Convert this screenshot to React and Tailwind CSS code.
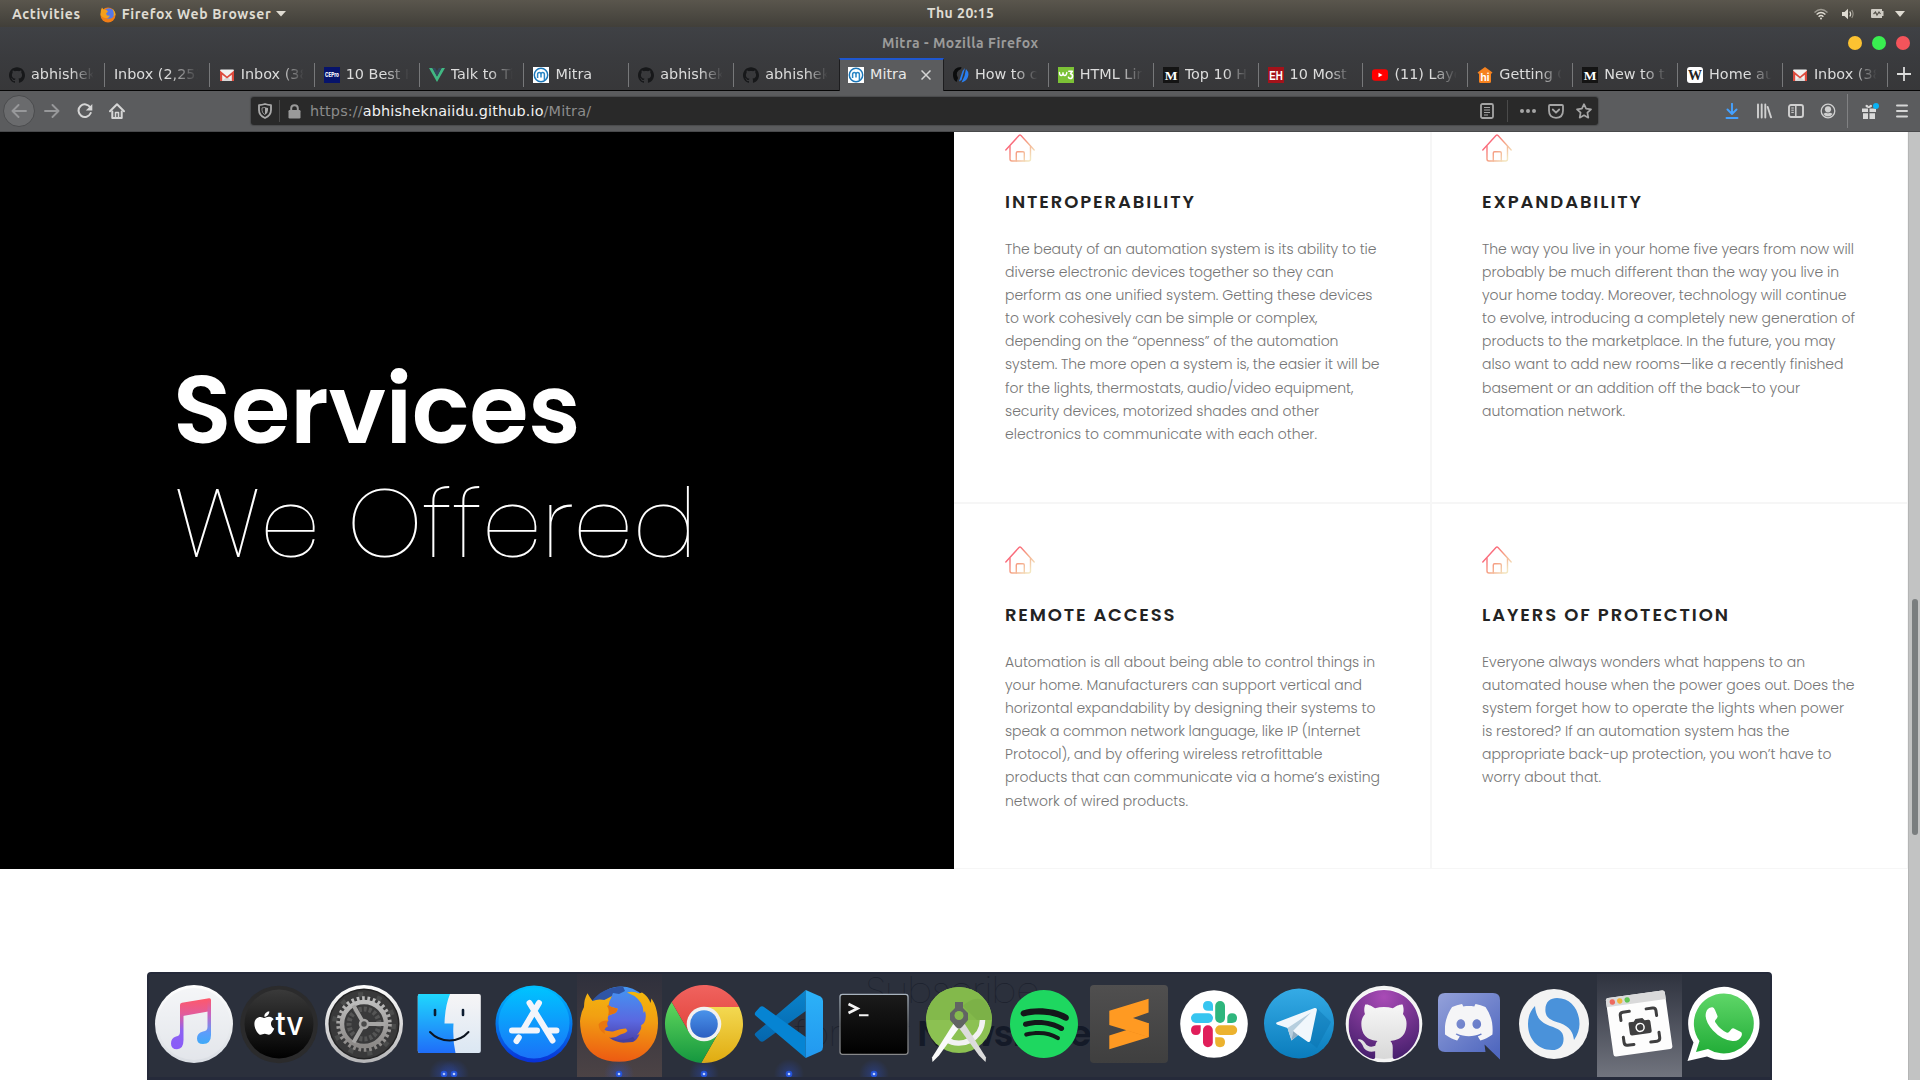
import React, { useLayoutEffect, useRef } from "react";
import { SiGithub, SiDiscord, SiSpotify } from "react-icons/si";
import { FaApple } from "react-icons/fa";

/* Single line of text whose tracking is adjusted to fill a given width. */
function Fit({ w, className = "", children }) {
  const ref = useRef(null);
  useLayoutEffect(() => {
    const el = ref.current;
    el.style.letterSpacing = "0px";
    const natural = el.getBoundingClientRect().width;
    const n = el.textContent.length;
    el.style.letterSpacing = `${(w - natural) / Math.max(1, n - 1)}px`;
  }, [w]);
  return (
    <span ref={ref} className={`inline-block whitespace-nowrap ${className}`}>
      {children}
    </span>
  );
}

/* ---------- Top bar ---------- */

function FirefoxMini() {
  return (
    <svg width="16" height="17" viewBox="0 0 16 17">
      <circle cx="8" cy="9" r="7.5" fill="#f07d16" />
      <circle cx="9" cy="7.5" r="5.3" fill="#5578e8" />
      <path d="M1 4L2 1.5 3.5 3.5 6.5 4 8 5.5 6 7.5 7 9.5 10 9.8 8 12C4 13 .5 10 .5 8Z" fill="#f5a01c" />
      <path d="M12 2.5Q15.5 5 15.5 9L13.5 10Q14.5 6 12 2.5Z" fill="#f0a81c" />
    </svg>
  );
}

function TopBar() {
  return (
    <div className="flex h-[27px] items-center bg-linear-to-b from-[#5a564d] to-[#413f39] font-['Ubuntu','Noto_Sans',sans-serif] text-[14px] font-semibold text-[#dfdbd2]">
      <div className="flex w-[900px] items-center pt-px pl-3">
        <Fit w={68}>Activities</Fit>
        <div className="ml-[19px] flex items-center gap-[6px]">
          <FirefoxMini />
          <Fit w={149}>Firefox Web Browser</Fit>
          <svg width="10" height="6" viewBox="0 0 10 6" className="-ml-px"><path d="M0 0H10L5 5.5Z" fill="#dfdbd2" /></svg>
        </div>
      </div>
      <div className="w-[120px] pl-[27px]">
        <Fit w={67}>Thu 20:15</Fit>
      </div>
      <div className="flex flex-1 items-center justify-end pr-[15px]">
        <svg width="16" height="14" viewBox="0 0 16 14" fill="none" stroke="#dfdbd2" strokeWidth="1.4">
          <path d="M1.5 5.5Q8 -.5 14.5 5.5" opacity=".55" />
          <path d="M3.6 7.6Q8 3.6 12.4 7.6" />
          <path d="M5.6 9.8Q8 7.4 10.4 9.8" />
          <circle cx="8" cy="11.4" r="1" fill="#dfdbd2" stroke="none" />
        </svg>
        <svg width="14" height="12" viewBox="0 0 14 12" className="ml-[12px]">
          <path d="M1 4H3.5L7 .8V11.2L3.5 8H1Z" fill="#dfdbd2" />
          <path d="M8.8 3.5Q10.5 6 8.8 8.5" stroke="#dfdbd2" strokeWidth="1.2" fill="none" />
          <path d="M10.8 2Q13.4 6 10.8 10" stroke="#dfdbd2" strokeWidth="1.1" fill="none" opacity=".5" />
        </svg>
        <svg width="13" height="9" viewBox="0 0 13 9" className="ml-[16px]">
          <path d="M1 0H11V2H12.5V7H11V9H1Q0 9 0 8V1Q0 0 1 0Z" fill="#cfccc4" />
          <path d="M2.5 5L4.5 3 6 6 8 3 9.5 5" stroke="#55524a" strokeWidth="1.2" fill="none" />
        </svg>
        <svg width="10" height="6" viewBox="0 0 10 6" className="ml-[11px]"><path d="M0 0H10L5 6Z" fill="#dfdbd2" /></svg>
      </div>
    </div>
  );
}

/* ---------- Window header ---------- */

function TitleBar() {
  return (
    <div className="flex h-[31px] items-center bg-linear-to-b from-[#3f4145] to-[#3a3b3e]">
      <div className="w-[960px] pt-px pl-[882px] font-['Ubuntu','Noto_Sans',sans-serif] text-[14px] font-semibold text-[#9b9b9a]">
        <Fit w={156}>Mitra - Mozilla Firefox</Fit>
      </div>
      <div className="flex flex-1 justify-end gap-[10px] pr-[10px]">
        <div className="size-[14px] rounded-full bg-[#fcc231]" />
        <div className="size-[14px] rounded-full bg-[#39ee50]" />
        <div className="size-[14px] rounded-full bg-[#f4545b]" />
      </div>
    </div>
  );
}

const GitHubFav = () => <SiGithub size={16} color="#17181a" />;
const GmailFav = () => (
  <svg width="16" height="16" viewBox="0 0 16 16">
    <rect x="1" y="2.5" width="14" height="11.5" rx="1" fill="#f1f1f1" />
    <path d="M3 14L8 9.5 13 14Z" fill="#d8d8d8" />
    <path d="M1 14V3.5L8 9.5 15 3.5V14H12.8V7.8L8 11.6 3.2 7.8V14Z" fill="#dd4b3e" />
  </svg>
);
const MitraFav = () => (
  <svg width="16" height="16" viewBox="0 0 16 16">
    <rect width="16" height="16" fill="#fff" />
    <circle cx="8" cy="8" r="6.7" fill="none" stroke="#1a76b8" strokeWidth="1.5" />
    <path d="M4.6 11V7.4Q4.6 5.6 6.3 5.6 8 5.6 8 7.4V10.5M8 7.4Q8 5.6 9.7 5.6 11.4 5.6 11.4 7.4V13" fill="none" stroke="#2b86c5" strokeWidth="1.5" />
  </svg>
);
const VueFav = () => (
  <svg width="16" height="16" viewBox="0 0 16 16">
    <path d="M0 1H3.4L8 9.5 12.6 1H16L8 15Z" fill="#41b883" />
    <path d="M3.4 1H6.2L8 4.2 9.8 1H12.6L8 9.5Z" fill="#35495e" />
  </svg>
);
const Letters = ({ bg, fg, t, font, size, rx = 0, fit }) => (
  <svg width="16" height="16" viewBox="0 0 16 16">
    <rect width="16" height="16" rx={rx} fill={bg} />
    <text x="8" y="12.6" textAnchor="middle" fill={fg} fontFamily={font} fontSize={size} fontWeight="700" textLength={fit} lengthAdjust="spacingAndGlyphs">{t}</text>
  </svg>
);
const CEFav = () => (
  <svg width="16" height="16" viewBox="0 0 16 16">
    <rect width="16" height="16" fill="#06136b" />
    <text x="1" y="10" textLength="14" lengthAdjust="spacingAndGlyphs" fill="#fff" fontFamily="Inter, sans-serif" fontSize="5.5" fontWeight="800">CEPro</text>
  </svg>
);
const SlashFav = () => (
  <svg width="16" height="16" viewBox="0 0 16 16">
    <path d="M8.5 0Q0 0 0 8 0 13 3.5 15L5 11Q3 8 4 5.500 5 3 8 2Z" fill="#0b0c0d" />
    <path d="M12 1L9.500 4 6 14.500 8.500 13Z" fill="#2a7ff0" />
    <path d="M13 2Q17 6 14.500 11 13 14 8.500 15.500L11.500 9Z" fill="#2a7ff0" />
  </svg>
);
const YouTubeFav = () => (
  <svg width="16" height="16" viewBox="0 0 16 16">
    <rect x="0" y="2.300" width="16" height="11.400" rx="3" fill="#f00" />
    <path d="M6.500 5.800L10.500 8 6.500 10.200Z" fill="#fff" />
  </svg>
);
const HiFav = () => (
  <svg width="16" height="16" viewBox="0 0 16 16">
    <path d="M8 0L15.500 5.500 14 7V14.500Q14 16 12.500 16H3.500Q2 16 2 14.500V7L.5 5.500Z" fill="#f6821f" />
    <text x="8" y="13.500" textAnchor="middle" fill="#fff" fontFamily="Inter, sans-serif" fontSize="10" fontWeight="700">hi</text>
  </svg>
);
const W3Fav = () => (
  <svg width="16" height="16" viewBox="0 0 16 16" fill="none" stroke="#fff" strokeLinecap="round" strokeLinejoin="round">
    <rect width="16" height="16" fill="#7cc236" stroke="none" />
    <path d="M1.500 5.500Q1.500 8.500 3.300 8.500 5 8.500 5 5.800 5 8.500 6.800 8.500 8.500 8.500 8.800 5.500" strokeWidth="1.400" />
    <path d="M10.800 4.300H14.300L12.500 6.800Q14.700 7 14.500 9.300 14.200 11.600 12 11.500 10.800 11.400 10.500 10.300" strokeWidth="1.600" />
  </svg>
);
const MFav = () => <Letters bg="#141414" fg="#fff" t="M" font="Liberation Serif, serif" size={13.5} />;
const EHFav = () => <Letters bg="#a4121a" fg="#fff" t="EH" font="Liberation Sans, sans-serif" size={12.5} fit={13.5} />;
const WikiFav = () => <Letters bg="#fff" fg="#222" t="W" font="Liberation Serif, serif" size={14} rx={3} />;

const tabs = [
  [GitHubFav, "abhishek"],
  [null, "Inbox (2,253"],
  [GmailFav, "Inbox (38)"],
  [CEFav, "10 Best Ho"],
  [VueFav, "Talk to Ti"],
  [MitraFav, "Mitra"],
  [GitHubFav, "abhishek"],
  [GitHubFav, "abhishek"],
  [MitraFav, "Mitra", true],
  [SlashFav, "How to cre"],
  [W3Fav, "HTML Link"],
  [MFav, "Top 10 Ho"],
  [EHFav, "10 Most P"],
  [YouTubeFav, "(11) Layou"],
  [HiFav, "Getting Gr"],
  [MFav, "New to the"],
  [WikiFav, "Home auto"],
  [GmailFav, "Inbox (38)"],
];

function Tab({ tab, divider }) {
  const [Icon, label, active] = tab;
  return (
    <div
      className={
        active
          ? "flex h-[33px] w-[104.89px] items-center border-x border-t-2 border-x-[#1d1d1f] border-t-[#1f57cf] bg-[#5b5c5e] pr-[7px] pb-px pl-2"
          : "flex h-[32px] w-[104.89px] items-center pt-px pl-[9px]"
      }
    >
      {Icon && <span className="mr-[6px] flex size-4 shrink-0 items-center"><Icon /></span>}
      <span
        className={
          active
            ? "w-[51px] overflow-hidden whitespace-nowrap text-[#e8e8e8]"
            : "flex-1 overflow-hidden mask-r-from-[62%] mask-r-to-[98%] pt-px whitespace-nowrap text-[#dcdcdc]"
        }
      >
        {label}
      </span>
      {active ? (
        <svg width="10" height="10" viewBox="0 0 10 10" stroke="#d4d4d4" strokeWidth="1.5"><path d="M.5 .5L9.500 9.500M9.500 .5L.5 9.500" /></svg>
      ) : (
        <span className={divider ? "ml-[9px] h-[24px] w-px bg-[#77787a]" : "ml-[10px]"} />
      )}
    </div>
  );
}

function TabStrip() {
  return (
    <div className="flex h-[33px] bg-linear-to-b from-[#3a3b3e] to-[#373739] font-['DejaVu_Sans',sans-serif] text-[14.4px] shadow-[inset_0_-1px_0_#060606]">
      {tabs.map((t, i) => (
        <Tab key={i} tab={t} divider={i !== 7} />
      ))}
      <div className="flex h-[32px] flex-1 items-center justify-center">
        <svg width="14" height="14" viewBox="0 0 14 14" stroke="#dcdcdc" strokeWidth="1.800"><path d="M7 0V14M0 7H14" /></svg>
      </div>
    </div>
  );
}

const Cell = ({ children, w = "w-8" }) => <div className={`flex ${w} shrink-0 items-center justify-center`}>{children}</div>;

function NavBar() {
  return (
    <div className="flex h-[41px] items-center bg-[#5b5c5e] pb-px pl-[3px] shadow-[inset_0_-1px_0_#48494b]">
      <div className="flex size-8 items-center justify-center rounded-full border border-[#4b4c4e] bg-[#6a6b6d]">
        <svg width="16" height="14" viewBox="0 0 16 14" fill="none" stroke="#97989a" strokeWidth="1.900" strokeLinecap="round" strokeLinejoin="round"><path d="M15 7H1.500M7.500 1L1.500 7 7.500 13" /></svg>
      </div>
      <Cell w="w-[34px]">
        <svg width="16" height="14" viewBox="0 0 16 14" fill="none" stroke="#97989a" strokeWidth="1.900" strokeLinecap="round" strokeLinejoin="round"><path d="M1 7H14.500M8.500 1L14.500 7 8.500 13" /></svg>
      </Cell>
      <Cell>
        <svg width="16" height="16" viewBox="0 0 16 16" fill="none"><path d="M13.300 4.500A6.300 6.300 0 1 0 13.700 10" stroke="#d6d6d6" strokeWidth="2" strokeLinecap="round" /><path d="M15.300 1V7.500H8.800Z" fill="#d6d6d6" /></svg>
      </Cell>
      <Cell>
        <svg width="16" height="16" viewBox="0 0 16 16" fill="none" stroke="#d6d6d6" strokeLinecap="round" strokeLinejoin="round"><path d="M1 8.300L8 1.300 15 8.300" strokeWidth="2" /><path d="M3.300 8.500V15H12.700V8.500" strokeWidth="2" /><path d="M6.500 15V9.500H9.500V15" strokeWidth="1.500" /></svg>
      </Cell>
      <div className="ml-[118px] flex h-[28px] w-[1347px] items-center rounded-[3px] bg-[#292929] shadow-[0_0_1px_1px_#4a4b4d]">
        <Cell w="w-[28px]">
          <svg width="14" height="16" viewBox="0 0 14 16" fill="none" stroke="#aaa" strokeLinejoin="round"><path d="M7 1Q10 2 13 2.200V7Q13 12.500 7 15 1 12.500 1 7V2.200Q4 2 7 1Z" strokeWidth="1.800" /><path d="M7 4.300Q9 4.800 10 4.900V7.200Q10 10 7 11.800Z" fill="#aaa" stroke="none" /><path d="M7 4.300Q5 4.800 4 4.900V7.200Q4 10 7 11.800" strokeWidth=".8" /></svg>
        </Cell>
        <span className="h-[22px] w-px bg-[#4a4a4a]" />
        <Cell w="w-[28px]">
          <svg width="13" height="15" viewBox="0 0 13 15"><rect x=".5" y="6" width="12" height="8.500" rx="1.200" fill="#9a9a9a" /><path d="M3.200 7V4.300Q3.200 1.200 6.500 1.200 9.800 1.200 9.800 4.300V7" fill="none" stroke="#9a9a9a" strokeWidth="2" /></svg>
        </Cell>
        <div className="flex-1 pt-px pl-[2px] font-['DejaVu_Sans',sans-serif] text-[14.4px] text-[#8c8c8c]">
          <Fit w={281}>https://<span className="text-[#f2f2f2]">abhisheknaiidu.github.io</span>/Mitra/</Fit>
        </div>
        <Cell w="w-[40px]">
          <svg width="14" height="16" viewBox="0 0 14 16" fill="none" stroke="#a5a5a5"><rect x="1" y="1" width="12" height="14" rx="1.500" strokeWidth="1.800" /><path d="M4 4.500H10M4 7H10M4 9.500H10M4 12H8" strokeWidth="1.100" /></svg>
        </Cell>
        <span className="h-[22px] w-px bg-[#4a4a4a]" />
        <Cell w="w-[39px]">
          <svg width="16" height="4" viewBox="0 0 16 4" fill="#a5a5a5"><circle cx="2" cy="2" r="2" /><circle cx="8" cy="2" r="2" /><circle cx="14" cy="2" r="2" /></svg>
        </Cell>
        <Cell w="w-[18px]">
          <svg width="16" height="15" viewBox="0 0 16 15" fill="none" stroke="#a5a5a5" strokeWidth="1.800" strokeLinecap="round" strokeLinejoin="round"><path d="M2 1H14Q15 1 15 2V6.500Q15 13.800 8 13.800 1 13.800 1 6.500V2Q1 1 2 1Z" /><path d="M4.800 5.500L8 8.700 11.200 5.500" /></svg>
        </Cell>
        <div className="mr-[6px] ml-[11px]">
          <svg width="16" height="16" viewBox="0 0 16 16" fill="none" stroke="#a5a5a5" strokeWidth="1.700" strokeLinejoin="round"><path d="M8 1.200L10.100 5.700 15 6.300 11.400 9.700 12.300 14.700 8 12.300 3.700 14.700 4.600 9.700 1 6.300 5.900 5.700Z" /></svg>
        </div>
      </div>
      <div className="ml-[118px] flex items-center">
        <Cell>
          <svg width="14" height="16" viewBox="0 0 14 16" fill="none" stroke="#45a1ff" strokeWidth="1.900" strokeLinecap="round" strokeLinejoin="round"><path d="M7 .8V10.500M2.500 6.500L7 11 11.500 6.500M1.500 15H12.500" /></svg>
        </Cell>
        <Cell>
          <svg width="16" height="16" viewBox="0 0 16 16" fill="none" stroke="#d0d0d0" strokeWidth="1.900" strokeLinecap="round"><path d="M2 1.500V14.500M5.700 1.500V14.500M9.300 1.500V14.500M11.700 4L15 14.300" /></svg>
        </Cell>
        <Cell>
          <svg width="16" height="14" viewBox="0 0 16 14" fill="none" stroke="#d0d0d0"><rect x="1" y="1" width="14" height="12" rx="2" strokeWidth="1.900" /><path d="M7.800 1V13" strokeWidth="1.500" /><path d="M3.300 4H5.800M3.300 6.200H5.800M3.300 8.400H5.800" strokeWidth="1" /></svg>
        </Cell>
        <Cell>
          <svg width="16" height="16" viewBox="0 0 16 16" fill="none"><circle cx="8" cy="8" r="6.800" stroke="#d0d0d0" strokeWidth="1.300" /><circle cx="8" cy="6.300" r="3.100" fill="#d0d0d0" /><path d="M3.400 11Q5 9.700 6.200 9.700 8 10.800 9.800 9.700 11 9.700 12.600 11 10.500 13.600 8 13.600 5.500 13.600 3.400 11Z" fill="#d0d0d0" /></svg>
        </Cell>
        <span className="ml-[3px] h-[34px] w-px bg-[#808183]" />
        <Cell w="w-[44px]">
          <svg width="18" height="17" viewBox="0 0 18 17" fill="#dadada"><path d="M1 5.500H7V9H1ZM8.500 5.500H15V9H8.500ZM2 10.300H7V16H2ZM8.500 10.300H14V16H8.500Z" /><path d="M7.500 5Q4 4 4.500 2.500 6 .8 7.800 3.500 9.500 .8 11 2.500 11.500 4 8.200 5Z" /><circle cx="15" cy="3" r="3" fill="#0ab3f5" /></svg>
        </Cell>
        <Cell w="w-[20px]">
          <svg width="12" height="14" viewBox="0 0 12 14" stroke="#d6d6d6" strokeWidth="2" strokeLinecap="round"><path d="M1 1.500H11M1 7H11M1 12.500H11" /></svg>
        </Cell>
      </div>
    </div>
  );
}

/* ---------- Web page ---------- */

function HouseIcon() {
  return (
    <svg width="30" height="28" viewBox="0 0 30 28" fill="none" stroke="url(#house)" strokeWidth="1.400" strokeLinecap="round" strokeLinejoin="round">
      <defs>
        <linearGradient id="house" gradientUnits="userSpaceOnUse" x1="5" y1="7" x2="25" y2="25">
          <stop offset="0" stopColor="#fb5c78" />
          <stop offset=".5" stopColor="#f5a184" />
          <stop offset="1" stopColor="#f3e6c0" />
        </linearGradient>
      </defs>
      <path d="M.8 16L14 1.500Q15 .5 16 1.500L29.200 16" />
      <path d="M5 12.500V25Q5 27 7 27H23.500Q25.500 27 25.500 25V12.500" />
      <path d="M11.300 27V19Q11.300 17.700 12.600 17.700H18Q19.300 17.700 19.300 19V27" />
    </svg>
  );
}

const services = [
  {
    title: ["INTEROPERABILITY", 189],
    pad: "pl-[51px] pt-[2px] border-b-2 border-r-2",
    lines: [
      ["The beauty of an automation system is its ability to tie", 371.5],
      ["diverse electronic devices together so they can", 328.5],
      ["perform as one unified system. Getting these devices", 367.5],
      ["to work cohesively can be simple or complex,", 312.5],
      ["depending on the “openness” of the automation", 333.5],
      ["system. The more open a system is, the easier it will be", 374.5],
      ["for the lights, thermostats, audio/video equipment,", 348.5],
      ["security devices, motorized shades and other", 314],
      ["electronics to communicate with each other.", 312],
    ],
  },
  {
    title: ["EXPANDABILITY", 159],
    pad: "pl-[50px] pt-[2px] border-b-2 border-r",
    lines: [
      ["The way you live in your home five years from now will", 372],
      ["probably be much different than the way you live in", 357],
      ["your home today. Moreover, technology will continue", 364.5],
      ["to evolve, introducing a completely new generation of", 373],
      ["products to the marketplace. In the future, you may", 353.5],
      ["also want to add new rooms—like a recently finished", 361.5],
      ["basement or an addition off the back—to your", 318],
      ["automation network.", 143],
    ],
  },
  {
    title: ["REMOTE ACCESS", 169.5],
    pad: "pl-[51px] pt-[42px] border-b border-r-2",
    down: true,
    lines: [
      ["Automation is all about being able to control things in", 370],
      ["your home. Manufacturers can support vertical and", 357],
      ["horizontal expandability by designing their systems to", 370.5],
      ["speak a common network language, like IP (Internet", 355.5],
      ["Protocol), and by offering wireless retrofittable", 317.5],
      ["products that can communicate via a home’s existing", 375],
      ["network of wired products.", 183],
    ],
  },
  {
    title: ["LAYERS OF PROTECTION", 246],
    pad: "pl-[50px] pt-[42px] border-b border-r",
    down: true,
    lines: [
      ["Everyone always wonders what happens to an", 323],
      ["automated house when the power goes out. Does the", 372.5],
      ["system forget how to operate the lights when power", 362],
      ["is restored? If an automation system has the", 307.5],
      ["appropriate back-up protection, you won’t have to", 349.5],
      ["worry about that.", 119],
    ],
  },
];

function ServiceCard({ s }) {
  return (
    <article className={`flex flex-col items-start border-[#f6f6f6] bg-white ${s.pad}`}>
      <HouseIcon />
      <h3 className={`h-6 text-[18px] leading-6 font-semibold text-[#232323] ${s.down ? "mt-[29px]" : "mt-[28px]"}`}>
        <Fit w={s.title[1]}>{s.title[0]}</Fit>
      </h3>
      <p className="mt-[24px] flex flex-col items-start text-[14px] leading-[23.1px] font-light text-[#757575]">
        {s.lines.map(([t, w]) => (
          <Fit key={t} w={w}>{t}</Fit>
        ))}
      </p>
    </article>
  );
}

function Page() {
  return (
    <main className="flex h-[948px] bg-white font-['Poppins','Inter',sans-serif]">
      <div className="w-[1908px]">
        <section className="flex h-[737px]">
          <div className="flex w-[954px] flex-col items-start bg-black pt-[221px] text-[96px] leading-[114px] text-white">
            <h2 className="flex flex-col items-start">
              <Fit w={407.5} className="ml-[173px] font-semibold">Services</Fit>
              <Fit w={523} className="ml-[174px] font-thin">We Offered</Fit>
            </h2>
          </div>
          <div className="grid w-[954px] grid-cols-[478px_476px] grid-rows-[372px_365px]">
            {services.map((s) => (
              <ServiceCard key={s.title[0]} s={s} />
            ))}
          </div>
        </section>
      </div>
      <div className="flex w-3 justify-center border-l border-[#b4b5b5] bg-[#c2c3c3] pt-[467px]">
        <div className="h-[236px] w-[6px] rounded-full bg-[#7a7e7f]" />
      </div>
    </main>
  );
}

/* ---------- Dock ---------- */

function Grad({ id, stops, x2 = 0, y2 = 1 }) {
  return (
    <linearGradient id={id} x1="0" y1="0" x2={x2} y2={y2}>
      {stops.map((c, i) => (
        <stop key={i} offset={i / (stops.length - 1)} stopColor={c} />
      ))}
    </linearGradient>
  );
}

const Music = () => (
  <>
    <Grad id="mu" stops={["#ffffff", "#d9dde3"]} />
    <linearGradient id="mn" gradientUnits="userSpaceOnUse" x1="40" y1="25" x2="40" y2="74"><stop offset="0" stopColor="#fd586c" /><stop offset=".3" stopColor="#e35c9a" /><stop offset=".65" stopColor="#8c62f2" /><stop offset="1" stopColor="#8a5cf8" /></linearGradient>
    <linearGradient id="mr" gradientUnits="userSpaceOnUse" x1="56" y1="25" x2="56" y2="70"><stop offset="0" stopColor="#fd586c" /><stop offset=".35" stopColor="#c565c4" /><stop offset=".75" stopColor="#5c9dfb" /><stop offset="1" stopColor="#3faaf8" /></linearGradient>
    <circle cx="42" cy="50" r="39" fill="url(#mu)" />
    <circle cx="42" cy="50" r="36" fill="#eceef2" opacity=".5" />
    <path d="M28 31Q28 29.300 30 28.800L57 24.300Q59 24 59 26V37L28 42.500Z" fill="url(#mn)" />
    <path d="M28 31H31.500V66Q31.500 75 25 75.300 19 75.300 19 69.500 19 64 24 62.500 28 62 28 58Z" fill="url(#mn)" />
    <path d="M55.500 26H59V61Q59 70 51 70 45 70 45 64.500 45 59 51 57.500 55.500 57 55.500 53Z" fill="url(#mr)" />
  </>
);
const AppleTV = () => (
  <>
    <Grad id="tv" stops={["#3a3a3a", "#000000"]} />
    <circle cx="42" cy="50.500" r="38.800" fill="#2b2b2c" />
    <circle cx="42" cy="50" r="34.500" fill="url(#tv)" />
    <FaApple x="13.800" y="35.500" size={27} color="#fff" />
    <text x="38.500" y="60.500" fill="#fff" fontFamily="Inter, sans-serif" fontSize="33" fontWeight="500" textLength="28" lengthAdjust="spacingAndGlyphs">tv</text>
  </>
);
const Settings = () => (
  <>
    <Grad id="s1" stops={["#ffffff", "#b5b5b7"]} />
    <Grad id="s2" stops={["#bdbdbd", "#8b8886"]} />
    <circle cx="42" cy="50" r="39" fill="url(#s1)" />
    <circle cx="42" cy="50" r="35.500" fill="#232324" />
    <circle cx="42" cy="50" r="34" fill="#39393a" />
    <circle cx="42" cy="50" r="29.500" fill="none" stroke="#4b4c4c" strokeWidth="5" strokeDasharray="5 14" />
    <circle cx="42" cy="50" r="15" fill="none" stroke="#555" strokeWidth="5" strokeDasharray="3 2" />
    <circle cx="42" cy="50" r="25.500" fill="none" stroke="url(#s2)" strokeWidth="4.500" strokeDasharray="2.650 2.690" />
    <circle cx="42" cy="50" r="22" fill="none" stroke="url(#s2)" strokeWidth="4.500" />
    <path d="M46 50H63M40 46.500L31.500 31.500M40 53.500L31.500 68.500" stroke="#a6a5a4" strokeWidth="4" />
    <circle cx="42" cy="50" r="4" fill="#4a4a4a" stroke="#a6a5a4" strokeWidth="2.500" />
  </>
);
const Finder = () => (
  <>
    <Grad id="f1" stops={["#1fd7fd", "#1f6df9"]} />
    <Grad id="f2" stops={["#f6f5f6", "#dbe7f3"]} />
    <rect x="10.800" y="20" width="63" height="59" rx="2" fill="url(#f2)" />
    <path d="M12.800 20H43Q38 32 37.500 49.500H46.500Q45.500 66 48.500 79H12.800Q10.800 79 10.800 77V22Q10.800 20 12.800 20Z" fill="url(#f1)" />
    <path d="M28 36V41M56 36V41" stroke="#0c1c30" strokeWidth="2.600" strokeLinecap="round" />
    <path d="M23 58Q31 66.500 42.500 66.500 54 66.500 61.500 58" fill="none" stroke="#0c1420" strokeWidth="2" strokeLinecap="round" />
  </>
);
const AppStore = () => (
  <>
    <Grad id="as" stops={["#00c3ff", "#1a72f8"]} />
    <Grad id="as2" stops={["#00c0ff", "#0930d6"]} />
    <circle cx="42" cy="50" r="38.500" fill="url(#as2)" />
    <circle cx="42" cy="49" r="35.500" fill="url(#as)" />
    <g stroke="#f2f5fb" strokeWidth="6" strokeLinecap="round">
      <path d="M47 29L31 56M37.500 29L60.500 66.500" />
      <path d="M20 56.500H45M57 56.500H64.500" />
      <path d="M26.800 63.500L24.500 67" />
    </g>
  </>
);
const Firefox = () => (
  <>
    <linearGradient id="fx" gradientUnits="userSpaceOnUse" x1="46" y1="15" x2="40" y2="88"><stop offset="0" stopColor="#f3b70d" /><stop offset=".4" stopColor="#f2a012" /><stop offset="1" stopColor="#ed5a12" /></linearGradient>
    <linearGradient id="fb" gradientUnits="userSpaceOnUse" x1="50" y1="13" x2="48" y2="69"><stop offset="0" stopColor="#4396f3" /><stop offset=".6" stopColor="#5a68e0" /><stop offset="1" stopColor="#4a3fa6" /></linearGradient>
    <circle cx="44" cy="43" r="30.500" fill="url(#fb)" />
    <path d="M14 28Q26 12.500 46 12.500L48 17 42 20 36 19 34 24 20 28Z" fill="#2e55a6" />
    <path d="M31 61Q42 70 56 63L58 66Q46 74 30 66Z" fill="#45409f" />
    <path d="M7 33Q7 25 10.500 19.300Q12.500 23 15.500 27Q21 24.500 27.500 26L35 22Q32 27 31.500 31.500 33 33 40.500 34.500 40.500 38 37 39.500L31.500 41.500Q30 44 31.500 47 24 47 22 51 26 58 36 57.500 44 54.500 49 54.500L50.500 57Q48 60 43.500 60.500 38 64.500 32 63.500 40 69.500 49 68.500L56 68Q61 65 62.500 60L60 61Q65.500 55 64 51.500L67 49Q70 44 68 37L66.500 39Q67 29 57.500 22L50 18.500Q56 16.500 62 19.500L65 18.500Q71 22 73.500 29L74.500 24.500Q81 34 81 49 81 60 77 68 66 87.700 42 87.700 16 87.700 7 68 3 58 3 47 4 38 7 33Z" fill="url(#fx)" />
    <path d="M31.500 31Q33 33 40.500 34.500 40.500 38 37 39.500L31 41.500Q33 36 30 32Z" fill="#e4730f" />
    <path d="M31.500 46.500Q24 46 21.500 50.500 22 57 28 60 26 54 31 52.500 29 49 31.500 46.500Z" fill="#e9770f" />
  </>
);
const Chrome = () => (
  <>
    <Grad id="cr" stops={["#f0635f", "#e2443c"]} />
    <Grad id="cy" stops={["#f3d951", "#e0ab10"]} />
    <Grad id="cg" stops={["#5fd65c", "#15973f"]} />
    <Grad id="cb" stops={["#4a93ea", "#2c5fc2"]} />
    <path d="M42 33H77.100A39 39 0 0 1 39.200 88.900L56.700 58.500Z" fill="url(#cy)" />
    <path d="M9.700 28.100L27.300 58.500 56.700 58.500 39.200 88.900A39 39 0 0 1 9.700 28.100Z" fill="url(#cg)" />
    <path d="M77.100 33H42L27.300 58.500 9.700 28.100A39 39 0 0 1 77.100 33Z" fill="url(#cr)" />
    <circle cx="42" cy="50" r="17.300" fill="#f1f1f1" />
    <circle cx="42" cy="50" r="13.800" fill="url(#cb)" />
  </>
);
const VSCode = () => (
  <>
    <Grad id="va" stops={["#0a84cc", "#0566ad"]} />
    <Grad id="vc" stops={["#2cb2f8", "#2298ef"]} />
    <path d="M8.500 62Q7 60.500 8.500 59L58.700 16V37L17 67Q15 68.500 13 67Z" fill="url(#va)" />
    <path d="M8.500 41.500Q7 40 8.500 38L13 33Q15 31.500 17 33L58.700 63V84Z" fill="#0684d3" />
    <path d="M58.700 16L73.500 22.500Q76 24 76 27V73Q76 76 73.500 77.500L58.700 84Z" fill="url(#vc)" />
  </>
);
const Terminal = () => (
  <>
    <Grad id="te" stops={["#1b1b1b", "#000000"]} />
    <Grad id="tb" stops={["#a9b4bf", "#6f7377", "#87888a"]} />
    <rect x="8" y="20.300" width="68" height="60" rx="2.500" fill="url(#te)" stroke="url(#tb)" strokeWidth="1.300" />
    <path d="M16.500 30L25.500 34.500 16.500 39" fill="none" stroke="#f4f4f4" strokeWidth="2.600" />
    <path d="M27 41.300H36.500" stroke="#f4f4f4" strokeWidth="2" />
  </>
);
const AndroidStudio = () => (
  <>
    <circle cx="42" cy="46" r="33" fill="#8cc152" />
    <path d="M9 46A33 33 0 0 1 75 46Z" fill="#83b94b" />
    <path d="M46 32L60 46H75Q75 40 72 33 64 18 48 30Z" fill="#78ab45" opacity=".6" />
    <path d="M65.500 46A23.500 23.500 0 0 1 29.500 65.500" fill="none" stroke="#f2f2f2" strokeWidth="5.500" />
    <path d="M36.500 49.500L42 54 22 81.500 15.500 88 15 83.500Z" fill="#fafafa" />
    <path d="M47.500 49.500L42 54 62 81.500 68.500 88 69 83.500Z" fill="#dcdcdc" />
    <path d="M38 28H46V34L51 39V46L45 53Q42 56 39 53L33 46V39L38 34Z" fill="#616463" />
    <circle cx="42" cy="41.500" r="4.500" fill="#86bb4e" />
  </>
);
const Spotify = () => (
  <>
    <circle cx="42" cy="50" r="32" fill="#14181a" />
    <SiSpotify x="8" y="16" size={68} color="#1ed760" />
  </>
);
const Sublime = () => (
  <>
    <Grad id="su" stops={["#504f4f", "#3f3f3f"]} />
    <rect x="3" y="11" width="78" height="78" rx="4" fill="url(#su)" />
    <path d="M22.300 61.500L46 54 61.600 49V63.300L22.300 75.300Z" fill="#ff9a22" />
    <path d="M40 56.500L61.600 49V63Z" fill="#e8851b" />
    <path d="M22.300 36.700L61.600 24.700V38.500L46 44 61.600 49.300V63L22.300 51Z" fill="#ff9a22" />
  </>
);
const Slack = () => (
  <>
    <circle cx="42" cy="50" r="33.800" fill="#fff" />
    <path d="M36 27Q41 27 41 32V36.700H36Q31 36.700 31 32 31 27 36 27Z" fill="#36c5f0" />
    <rect x="19" y="39.300" width="22" height="9.600" rx="4.800" fill="#36c5f0" />
    <rect x="43.200" y="27" width="9.800" height="22" rx="4.900" fill="#2eb67d" />
    <path d="M65 44Q65 48.900 60 48.900H55.300V44Q55.300 39.300 60 39.300 65 39.300 65 44Z" fill="#2eb67d" />
    <path d="M19 56Q19 51.200 24 51.200H28.700V56Q28.700 61 24 61 19 61 19 56Z" fill="#e01e5a" />
    <rect x="31" y="51.200" width="9.800" height="22" rx="4.900" fill="#e01e5a" />
    <rect x="43.200" y="51.200" width="22" height="9.800" rx="4.900" fill="#ecb22e" />
    <path d="M48 73.200Q43.200 73.200 43.200 68V63.300H48Q53 63.300 53 68 53 73.200 48 73.200Z" fill="#ecb22e" />
  </>
);
const Telegram = () => (
  <>
    <Grad id="tg" stops={["#35abe6", "#0a7cbc"]} />
    <circle cx="42" cy="49.500" r="35" fill="url(#tg)" />
    <path d="M59.500 34L74 48 60 74 52.500 68Z" fill="#0a6da8" opacity=".35" />
    <path d="M19.500 48.500L57.500 34Q60.500 33.500 59.800 36.500L53.500 66.500Q52.500 69 50.300 67.600L41 61 34.500 66.500 30.500 54 20 50.500Q18.500 49.500 19.500 48.500Z" fill="#f1f7fc" />
    <path d="M30.500 54L54 38.500 36 57 34.500 66.500Z" fill="#b6cede" />
    <path d="M36 57L41 61 34.500 66.500Z" fill="#90adc2" />
  </>
);
const GitHubDock = () => (
  <>
    <radialGradient id="gh" cx=".5" cy=".1" r=".9"><stop offset="0" stopColor="#a94bb6" /><stop offset="1" stopColor="#48206e" /></radialGradient>
    <Grad id="gw" stops={["#ffffff", "#d8d8d8"]} />
    <circle cx="42" cy="50" r="38.300" fill="#f4f4f4" />
    <circle cx="42" cy="50" r="35" fill="url(#gw)" />
    <SiGithub x="6.500" y="15" size={71} fill="url(#gh)" />
  </>
);
const Discord = () => (
  <>
    <Grad id="di" stops={["#94a1da", "#5068bf"]} x2={0.8} />
    <path d="M18 19H66Q73 19 73 26V85.500L57.500 70.500 58.500 78H18Q11 78 11 71V26Q11 19 18 19Z" fill="url(#di)" />
    <SiDiscord x="17.800" y="24.200" size={48} color="#f5f5f7" />
  </>
);
const Simplenote = () => (
  <>
    <circle cx="42" cy="50" r="35" fill="#f3f3f3" />
    <path d="M33.500 38C32.500 28 38 24 45 24 59 24 67.500 36 67.500 50Q67.500 58 62 66C61 58 58 53 48 49 38 46 34.500 44 33.500 38Z" fill="#4a92da" />
    <path d="M23 32C18 37 16 43 16 50 16 65 26 76 40 76 48 76 52 71 51.500 64 51 57 47 55 38 52 28 48 24 43 23 32Z" fill="#4a92da" />
  </>
);
const Screenshot = () => (
  <g transform="rotate(-8 42 49)">
    <rect x="12.300" y="20" width="59.500" height="59" rx="2.500" fill="#fdfdfd" />
    <path d="M14.800 20H69.300Q71.800 20 71.800 22.500V29H12.300V22.500Q12.300 20 14.800 20Z" fill="#d9d9da" />
    <circle cx="18.500" cy="24.500" r="2.700" fill="#ee6a5f" />
    <circle cx="26" cy="24.500" r="2.700" fill="#f0b63c" />
    <circle cx="33.500" cy="24.500" r="2.700" fill="#61c554" />
    <g fill="none" stroke="#3f3f40" strokeWidth="3" strokeLinecap="round">
      <path d="M24.500 44V39Q24.500 36 27.500 36H34M51 36H57.500Q60.500 36 60.500 39V44M60.500 61V66Q60.500 69.500 57.500 69.500H51M34 69.500H27.500Q24.500 69.500 24.500 66V61" />
    </g>
    <path d="M32.500 47H37L39 44.500H46L48 47H51.500Q53.500 47 53.500 49V58.500Q53.500 60.500 51.500 60.500H33.500Q31.500 60.500 31.500 58.500V49Q31.500 47 32.500 47Z" fill="#3f3f40" />
    <circle cx="42.500" cy="53.500" r="4" fill="#3f3f40" stroke="#fff" strokeWidth="1.500" />
  </g>
);
const WhatsApp = () => (
  <>
    <Grad id="wa" stops={["#5fd668", "#22ad38"]} />
    <path d="M42 12.700A36.700 36.700 0 1 1 25 82.500L5.500 87 11.500 68.500A36.700 36.700 0 0 1 42 12.700Z" fill="#fff" />
    <path d="M42 19.500A30 30 0 1 1 26 75L14 78 17.500 67A30 30 0 0 1 42 19.500Z" fill="url(#wa)" />
    <path d="M25 36Q27 33 30.500 33.300 32 33.500 33 36L35.500 42Q36 43.500 33.500 46 32.500 47 33.500 48.500 37.500 55 44.500 58.500 46 59 47 58L49.500 55Q50.500 54 52 54.500L59 58Q60.500 59 59.500 62 57 67.500 50.500 67 40 66 31 56.500 22 46.500 24 38.500Z" fill="#fff" />
  </>
);

const dock = [
  { I: Music }, { I: AppleTV }, { I: Settings }, { I: Finder, dots: [37, 47] }, { I: AppStore },
  { I: Firefox, dots: [42], bg: "bg-linear-to-b from-[#2f303c] to-[#4c4345]" },
  { I: Chrome, dots: [42] }, { I: VSCode, dots: [42] }, { I: Terminal, dots: [42] },
  { I: AndroidStudio }, { I: Spotify }, { I: Sublime }, { I: Slack }, { I: Telegram },
  { I: GitHubDock }, { I: Discord }, { I: Simplenote },
  { I: Screenshot, bg: "bg-linear-to-b from-[#2f333f] to-[#72757f]" }, { I: WhatsApp },
];

function Dock() {
  return (
    <div className="absolute top-[972px] left-[147px] h-[108px] w-[1625px] overflow-hidden rounded-t-[4px] border-2 border-b-[3px] border-[#252a3a] bg-[#2b303c]">
      {/* Newsletter heading showing faintly through the dock */}
      <div className="absolute top-[-5px] left-[645px] w-[320px] font-['Poppins','Inter',sans-serif] text-[36px] leading-[43px] text-[#1c212d]">
        <div className="pl-[72px] font-extralight"><Fit w={173}>Subscribe</Fit></div>
        <div className="flex">
          <Fit w={116} className="font-extralight">for our</Fit>
          <Fit w={188} className="ml-[7px] font-semibold text-[#141a28]">Newsletter</Fit>
        </div>
      </div>
      <div className="relative flex pl-[3px]">
        {dock.map(({ I, dots = [], bg = "" }, i) => (
          <div key={i} className={`h-[104px] w-[85px] shrink-0 ${bg}`}>
            <svg width="85" height="104" viewBox="0 0 85 104">
              <radialGradient id="glow"><stop offset="0" stopColor="#2a55e8" stopOpacity=".7" /><stop offset="1" stopColor="#2a55e8" stopOpacity="0" /></radialGradient>
              <I />
              {dots.map((x) => (
                <g key={x}>
                  <circle cx={x} cy="100" r="15" fill="url(#glow)" opacity=".5" />
                  <circle cx={x} cy="100" r="3.300" fill="#2453d8" />
                  <circle cx={x} cy="100" r="1.300" fill="#b9cdff" />
                </g>
              ))}
            </svg>
          </div>
        ))}
      </div>
    </div>
  );
}

export default function App() {
  return (
    <div className="relative h-[1080px] w-[1920px] overflow-hidden bg-white">
      <TopBar />
      <TitleBar />
      <TabStrip />
      <NavBar />
      <Page />
      <Dock />
    </div>
  );
}
